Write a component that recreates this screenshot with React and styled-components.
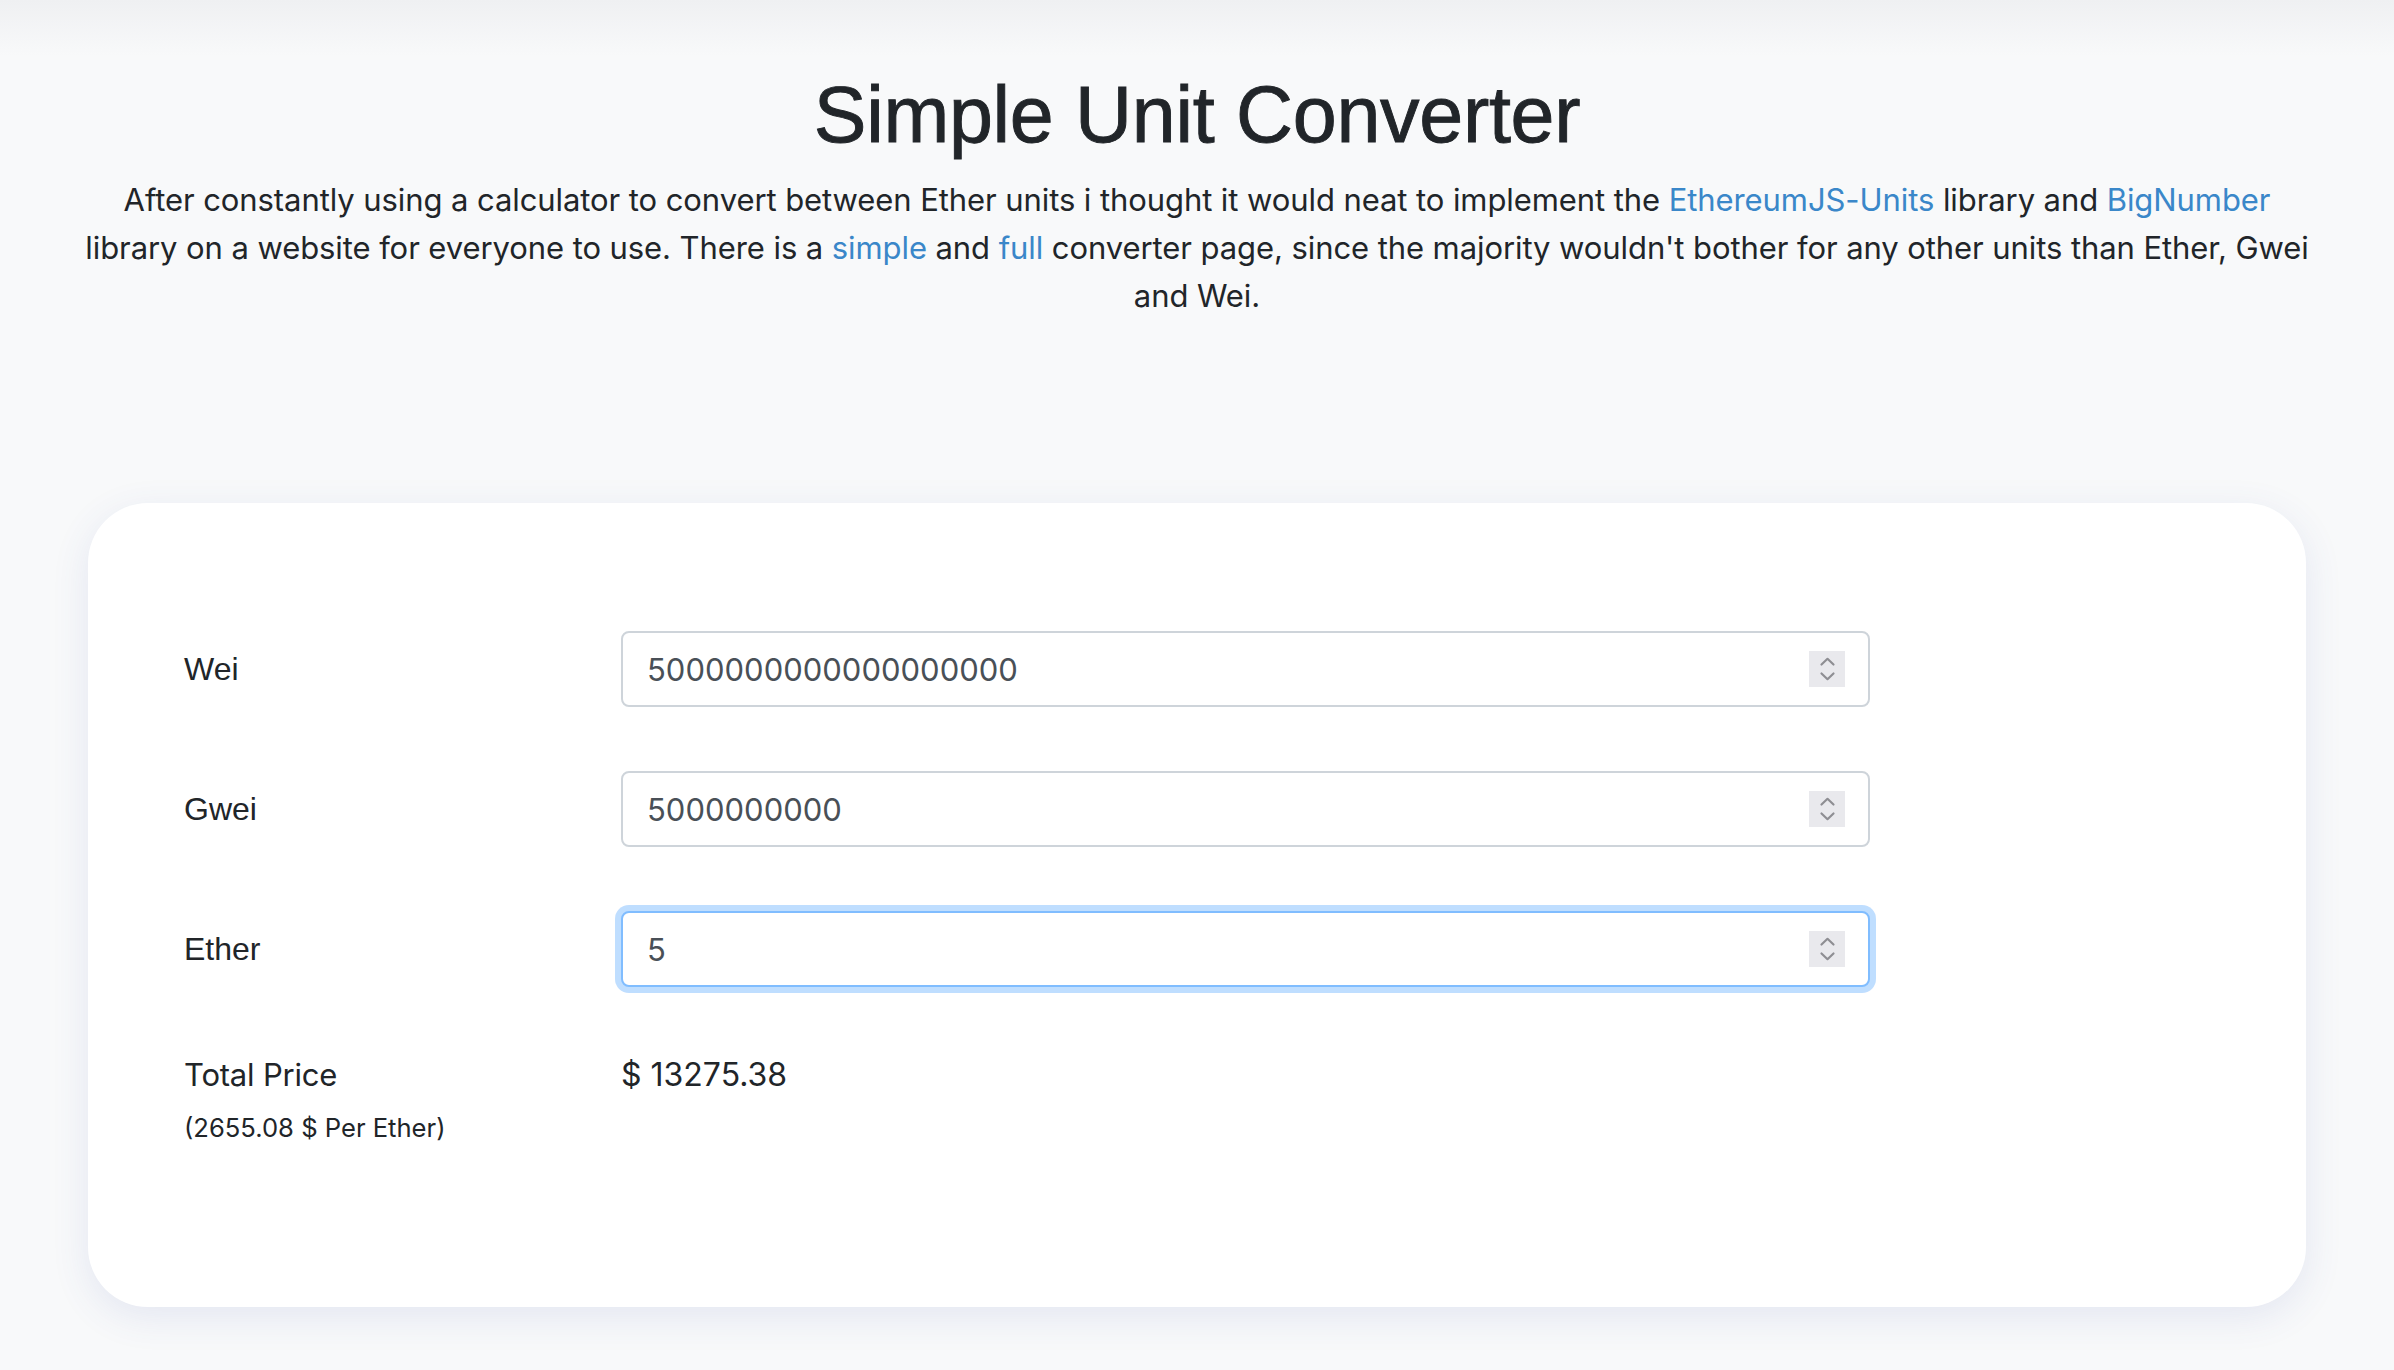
import React from "react";
import styled, { createGlobalStyle } from "styled-components";

const Global = createGlobalStyle`
  html, body { margin: 0; padding: 0; }
  body {
    background: linear-gradient(#eff0f2, #f8f9fa 56px) #f8f9fa;
    min-height: 1370px;
    color: #212529;
    font-family: Inter, "Noto Sans", sans-serif;
  }
  * { box-sizing: border-box; }
`;

const Page = styled.main`
  padding: 67px 88px 60px;
`;

const Title = styled.h1`
  margin: 0;
  text-align: center;
  font-family: "Liberation Sans", Arial, sans-serif;
  font-weight: 400;
  font-size: 79px;
  line-height: 96px;
  letter-spacing: -0.3px;
  -webkit-text-stroke: 0.9px #212529;
  color: #212529;
`;

const Intro = styled.p`
  margin: 13px -14px 0;
  text-align: center;
  font-family: Inter, "Noto Sans", sans-serif;
  font-size: 31px;
  line-height: 48px;
  letter-spacing: -0.08px;
  color: #212529;
`;

const Link = styled.a`
  color: #3a87c9;
  text-decoration: none;
`;

const Card = styled.section`
  margin-top: 183px;
  background: #fff;
  border-radius: 60px;
  box-shadow: 0 10px 38px rgba(60, 80, 170, 0.11);
  padding: 128px 96px 160px;
`;

const Form = styled.div`
  display: grid;
  grid-template-columns: 437px 1249px;
  row-gap: 64px;
`;

const Label = styled.div`
  display: flex;
  align-items: center;
  font-family: "Liberation Sans", Arial, sans-serif;
  font-size: 32px;
  color: #212529;
`;

const InputBox = styled.div`
  display: flex;
  align-items: center;
  height: 76px;
  padding: 0 23px 0 24px;
  background: #fff;
  border: 2px solid ${(p) => (p.$focused ? "#80bdff" : "#ced4da")};
  border-radius: 8px;
  box-shadow: ${(p) => (p.$focused ? "0 0 0 6px rgba(0, 123, 255, 0.25)" : "none")};
`;

const Field = styled.input`
  flex: 1;
  min-width: 0;
  border: 0;
  outline: none;
  padding: 0;
  background: transparent;
  font-family: Inter, "Noto Sans", sans-serif;
  font-size: 31px;
  color: #495057;
`;

const Spinner = styled.span`
  display: flex;
  width: 36px;
  height: 36px;
  background: #e9e9ed;
`;

const PriceLabel = styled.div`
  font-family: Inter, "Noto Sans", sans-serif;
  font-size: 31px;
  line-height: 48px;
  letter-spacing: -0.2px;
  color: #212529;
`;

const Small = styled.small`
  display: block;
  margin-top: 10px;
  font-size: 25.6px;
  line-height: 38px;
  letter-spacing: 0;
`;

const PriceValue = styled.div`
  font-family: Inter, "Noto Sans", sans-serif;
  font-size: 32px;
  line-height: 48px;
  color: #212529;
`;

const SpinIcon = () => (
  <svg width="36" height="36" viewBox="0 0 36 36" fill="none">
    <path d="M12.5 13.5 L18.5 7.8 L24.5 13.5" stroke="#8e8e93" strokeWidth="2.2" strokeLinecap="round" strokeLinejoin="round" />
    <path d="M12.5 22.5 L18.5 28.2 L24.5 22.5" stroke="#8e8e93" strokeWidth="2.2" strokeLinecap="round" strokeLinejoin="round" />
  </svg>
);

const rows = [
  { label: "Wei", value: "5000000000000000000" },
  { label: "Gwei", value: "5000000000" },
  { label: "Ether", value: "5", focused: true },
];

export default function App() {
  return (
    <>
      <Global />
      <Page>
        <Title>Simple Unit Converter</Title>
        <Intro>
          After constantly using a calculator to convert between Ether units i thought it would neat to implement the{" "}
          <Link href="#">EthereumJS-Units</Link> library and <Link href="#">BigNumber</Link> library on a website for
          everyone to use. There is a <Link href="#">simple</Link> and <Link href="#">full</Link> converter page, since
          the majority wouldn't bother for any other units than Ether, Gwei and Wei.
        </Intro>
        <Card>
          <Form>
            {rows.map((r) => (
              <React.Fragment key={r.label}>
                <Label>{r.label}</Label>
                <InputBox $focused={r.focused}>
                  <Field defaultValue={r.value} />
                  <Spinner>
                    <SpinIcon />
                  </Spinner>
                </InputBox>
              </React.Fragment>
            ))}
            <PriceLabel>
              Total Price
              <Small>(2655.08 $ Per Ether)</Small>
            </PriceLabel>
            <PriceValue>$ 13275.38</PriceValue>
          </Form>
        </Card>
      </Page>
    </>
  );
}
